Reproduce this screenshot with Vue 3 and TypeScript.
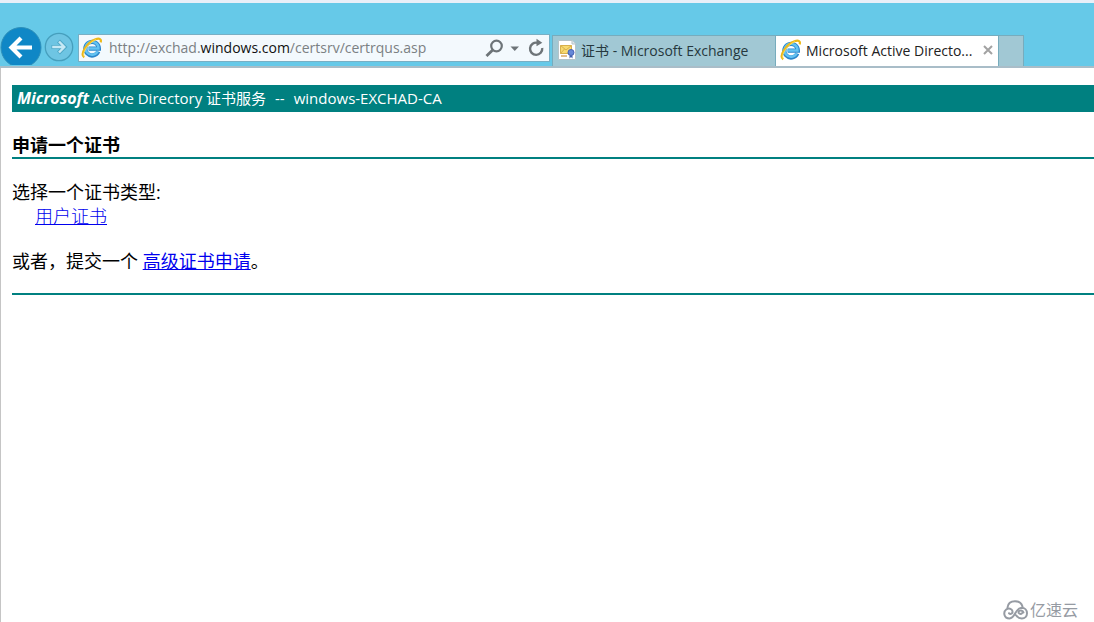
<script setup lang="ts">
import { ref } from 'vue'

const address = ref('http://exchad.windows.com/certsrv/certrqus.asp')
const editing = ref(false)
</script>

<template>
  <div class="window">
    <header class="chrome">
      <nav class="nav" aria-label="导航">
        <button class="back" type="button" aria-label="后退">
          <svg width="42" height="38" viewBox="0 0 42 38">
            <circle cx="21" cy="20.500" r="20" fill="#0f87c6" stroke="#2e8fb9" />
            <path d="M12 20.500H32M21 11L11.500 20.500L21 30" fill="none" stroke="#fff" stroke-width="4.200" />
          </svg>
        </button>
        <button class="forward" type="button" aria-label="前进">
          <svg width="30" height="30" viewBox="0 0 30 30">
            <circle cx="15" cy="15" r="13.700" fill="#6ec5e3" stroke="#469fbd" stroke-width="1.300" />
            <path d="M7.500 15H20M14.500 9L20.500 15L14.500 21" fill="none" stroke="#4ea8c7" stroke-width="4.200" />
            <path d="M8.200 15H20M15 9.500L20.300 15L15 20.500" fill="none" stroke="#c6e9f5" stroke-width="2.400" />
          </svg>
        </button>
      </nav>

      <form class="address" @submit.prevent>
        <svg class="ie" width="22" height="22" viewBox="0 0 22 22" aria-hidden="true">
          <path d="M17.300 14.500A6.800 6.800 0 1 1 17.900 11.700H7.600" fill="none" stroke="#2b86cb" stroke-width="4.200" />
          <path d="M16.700 14.400A6.500 6.500 0 1 1 17.500 11.500H7.500" fill="none" stroke="#62c2f1" stroke-width="2.400" />
          <path d="M3.200 20.300C-1.500 17 6 5.500 14.500 2.300C18.600.8 20.700 2.300 19.600 5.400" fill="none" stroke="#edb919" stroke-width="2.200" />
          <path d="M3.200 19.500C.8 15.500 8 5.500 15 2.500" fill="none" stroke="#ffe268" stroke-width=".8" />
        </svg>
        <div class="field">
          <input
            v-model="address"
            :class="{ editing }"
            type="text"
            aria-label="地址"
            spellcheck="false"
            @focus="editing = true"
            @blur="editing = false"
          />
          <span v-if="!editing" class="url" aria-hidden="true">http://exchad.<b>windows.com</b>/certsrv/certrqus.asp</span>
        </div>
        <button type="button" aria-label="搜索">
          <svg width="20" height="20" viewBox="0 0 20 20">
            <circle cx="11.500" cy="8" r="5.300" fill="none" stroke="#6d7478" stroke-width="2.200" />
            <path d="M7.700 12L1.500 18" stroke="#6d7478" stroke-width="2.800" />
          </svg>
        </button>
        <button type="button" aria-label="显示地址列表">
          <svg width="20" height="20" viewBox="0 0 20 20"><path d="M5.500 8.500H14L9.750 13Z" fill="#6d7478" /></svg>
        </button>
        <button type="button" aria-label="刷新">
          <svg width="22" height="20" viewBox="0 0 22 20">
            <path d="M12.500 4.800A6.100 6.100 0 1 0 17.200 10" fill="none" stroke="#6d7478" stroke-width="2.400" />
            <path d="M11.500 .8L17.300 4.800L11.500 8.300Z" fill="#6d7478" />
          </svg>
        </button>
      </form>

      <div class="tabs" role="tablist">
        <button class="tab" type="button" role="tab" aria-selected="false">
          <svg width="20" height="22" viewBox="0 0 20 22" aria-hidden="true">
            <path d="M1.500 1.500H15L18.500 5V20.500H1.500Z" fill="#fff" stroke="#b5c3c8" />
            <path d="M15 1.500V5H18.500" fill="#e3e8ea" stroke="#b5c3c8" />
            <path d="M3.500 6.500H14.500V14.500H3.500Z" fill="#f8da70" stroke="#d8b04c" />
            <path d="M3.500 6.500L9 11L14.500 6.500M3.500 14.500L7.500 10" fill="none" stroke="#d8b04c" />
            <path d="M4 17H10" stroke="#d9a765" stroke-width="1.500" />
            <circle cx="14" cy="13.500" r="3" fill="#6688d8" stroke="#4560b4" />
            <path d="M12.500 16.500V19.500L14 18L15.500 19.500V16.500" fill="#425fae" />
          </svg>
          <span class="label">证书 - Microsoft Exchange</span>
        </button>
        <div class="tab active">
          <button class="tab-main" type="button" role="tab" aria-selected="true">
            <svg class="ie" width="22" height="22" viewBox="0 0 22 22" aria-hidden="true">
              <path d="M17.300 14.500A6.800 6.800 0 1 1 17.900 11.700H7.600" fill="none" stroke="#2b86cb" stroke-width="4.200" />
              <path d="M16.700 14.400A6.500 6.500 0 1 1 17.500 11.500H7.500" fill="none" stroke="#62c2f1" stroke-width="2.400" />
              <path d="M3.200 20.300C-1.500 17 6 5.500 14.500 2.300C18.600.8 20.700 2.300 19.600 5.400" fill="none" stroke="#edb919" stroke-width="2.200" />
              <path d="M3.200 19.500C.8 15.500 8 5.500 15 2.500" fill="none" stroke="#ffe268" stroke-width=".8" />
            </svg>
            <span class="label">Microsoft Active Directo...</span>
          </button>
          <button class="close" type="button" aria-label="关闭标签页">
            <svg width="10" height="10" viewBox="0 0 10 10"><path d="M1 1L9 9M9 1L1 9" stroke="#a2a2a2" stroke-width="2" /></svg>
          </button>
        </div>
        <button class="new-tab" type="button" aria-label="新建标签页"></button>
      </div>
    </header>

    <main class="page">
      <div class="banner">
        <strong><i>Microsoft</i></strong>
        <span>Active Directory 证书服务</span>
        <span class="dashes">--</span>
        <span>windows-EXCHAD-CA</span>
      </div>
      <h1>申请一个证书</h1>
      <p class="prompt">选择一个证书类型:</p>
      <p class="choice"><a href="#user">用户证书</a></p>
      <p class="advanced">或者，提交一个 <a href="#advanced">高级证书申请</a>。</p>
      <hr />
    </main>

    <footer class="brand">
      <svg width="25" height="20" viewBox="0 0 25 20" aria-hidden="true">
        <g fill="none" stroke="#969ba3" stroke-width="2" stroke-linecap="round">
          <path d="M4.500 7.500C5 3.500 8 1.200 12 1.200C15.500 1.200 18.500 3 19.500 6.500" />
          <path d="M6 13.200C7.500 14.800 10 13.500 9.500 11.200C9 8.500 5.500 7.800 3.200 9.500C0 12 .8 18.400 6.500 18.400C12.500 18.400 12 8 18.500 7.800C22 7.800 24 10.300 24 13.200C24 16.200 21.800 18.400 18.800 18.400C16 18.400 14.200 17 13 15.200" />
          <path d="M19 13.200C17.500 14.800 15 13.500 15.500 11.500C16.200 9.800 20 10 20.500 12.500" />
        </g>
      </svg>
      <span>亿速云</span>
    </footer>
  </div>
</template>

<style>
body {
  margin: 0;
  background: #fff;
}
</style>

<style scoped>
.window {
  display: flex;
  flex-direction: column;
  min-height: 100vh;
  box-sizing: border-box;
  border-top: 3px solid #e9eff8;
  font-family: "Open Sans", "Noto Sans CJK SC", sans-serif;
  color: #000;
}

button {
  display: flex;
  align-items: center;
  margin: 0;
  padding: 0;
  border: 0;
  background: none;
  font: inherit;
}

svg {
  display: block;
  flex: none;
}

.chrome {
  display: flex;
  padding-top: 24px;
  height: 39px;
  border-bottom: 2px solid #a9bdc8;
  background: #66c9e8;
}

.nav {
  display: flex;
  flex: none;
  align-items: flex-start;
  gap: 2px;
  width: 78px;
}

.forward {
  margin-top: 5px;
}

.address {
  display: flex;
  align-items: center;
  flex: 0 1 472px;
  min-width: 200px;
  height: 28px;
  margin-top: 7px;
  padding: 0 2px;
  box-sizing: border-box;
  border: 1px solid #78afc4;
  background: #f3f9fd;
}

.field {
  position: relative;
  flex: 1;
  min-width: 0;
  height: 24px;
  margin-left: 6px;
  font-size: 14px;
  line-height: 24px;
}

.field input {
  width: 100%;
  height: 24px;
  padding: 0;
  border: 0;
  outline: 0;
  background: none;
  color: transparent;
  font: inherit;
}

.field input.editing {
  color: #222;
}

.url {
  position: absolute;
  inset: 0;
  overflow: hidden;
  white-space: nowrap;
  color: #7b8083;
  pointer-events: none;
}

.url b {
  font-weight: 400;
  color: #111;
}

.tabs {
  display: flex;
  flex: 0 1 472px;
  min-width: 0;
  margin: 8px 0 0 2px;
  font-size: 14px;
}

.tab {
  display: flex;
  align-items: center;
  flex: 1;
  min-width: 0;
  gap: 4px;
  padding: 0 5px 2px 4px;
  border: 1px solid #77acbd;
  border-bottom: 0;
  background: #a1c8d4;
  color: #26383e;
}

.tab.active {
  border-left: 0;
  background: #fff;
  color: #222;
}

.tab-main {
  flex: 1;
  min-width: 0;
  gap: 4px;
  color: inherit;
}

.label {
  white-space: nowrap;
}

.new-tab {
  flex: none;
  width: 25px;
  border: 1px solid #77acbd;
  border-width: 1px 1px 0 0;
  background: #a1c8d4;
}

.page {
  flex: 1;
  padding: 17px 0 0 11px;
  border-left: 1px solid #c5c5c5;
  font-size: 18px;
  line-height: 24px;
}

.banner {
  display: flex;
  gap: 3px;
  padding-left: 5px;
  background: #008080;
  color: #fff;
  font-size: 15px;
  line-height: 27px;
}

.banner strong {
  font-size: 16px;
}

.dashes {
  margin: 0 6px;
}

h1 {
  margin: 22px 0 0;
  border-bottom: 2px solid #008080;
  font-size: 18px;
  line-height: 23px;
}

p {
  margin: 0;
}

.prompt {
  margin-top: 21px;
}

.choice {
  padding-left: 23px;
}

.choice a {
  font-weight: 300;
}

.advanced {
  margin-top: 21px;
}

a {
  color: #0000ee;
}

hr {
  height: 2px;
  margin: 20px 0 0;
  border: 0;
  background: #008080;
}

.brand {
  display: flex;
  align-items: center;
  justify-content: flex-end;
  gap: 2px;
  padding: 0 16px 2px 0;
  border-left: 1px solid #c5c5c5;
  color: #969ba3;
  font-size: 16px;
  line-height: 20px;
}
</style>
